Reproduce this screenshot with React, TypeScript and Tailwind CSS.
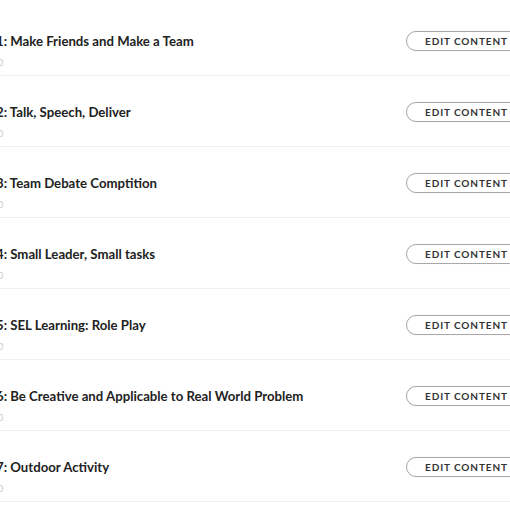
import React from "react";

const lessons = [
  "1: Make Friends and Make a Team",
  "2: Talk, Speech, Deliver",
  "3: Team Debate Comptition",
  "4: Small Leader, Small tasks",
  "5: SEL Learning: Role Play",
  "6: Be Creative and Applicable to Real World Problem",
  "7: Outdoor Activity",
];

export default function App() {
  return (
    <div
      className="w-[510px] h-[510px] overflow-hidden bg-white"
      style={{ fontFamily: "Lato, 'Open Sans', sans-serif" }}
    >
      <div className="-ml-[4px] w-[540px] pt-[5px]">
        {lessons.map((t) => (
          <div
            key={t}
            className="grid grid-cols-[410px_1fr] h-[71px] border-b border-[#efefef]"
          >
            <div className="pt-[28px]">
              <div className="text-[13.2px] leading-[16px] font-bold text-[#222]">{t}</div>
              <div className="mt-[9px] ml-[2px] text-[9px] leading-[10px] text-[#c8c8c8]">0</div>
            </div>
            <div className="pt-[26px]">
              <div className="h-[20px] w-[124px] rounded-full border border-[#a8a8a8] shadow-[0_0_1px_rgba(0,0,0,0.15)] pl-[18px] flex items-center text-[10px] font-bold tracking-[0.9px] text-[#333]">
                EDIT CONTENT
              </div>
            </div>
          </div>
        ))}
      </div>
    </div>
  );
}
